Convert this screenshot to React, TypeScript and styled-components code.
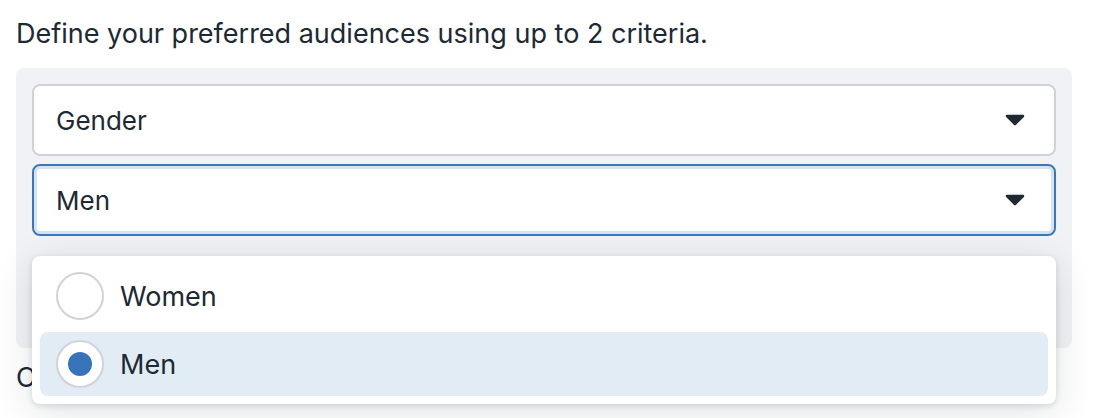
import React from "react";
import styled, { createGlobalStyle } from "styled-components";

const Global = createGlobalStyle`
  html, body { margin: 0; padding: 0; background: #ffffff; }
  body { font-family: Inter, "Noto Sans", "Liberation Sans", sans-serif; color: #1d2933; }
`;

const Page = styled.div`
  padding: 16px;
  width: 1056px;
  height: 386px;
  overflow: hidden;
`;

const Heading = styled.p`
  margin: 0 0 16px;
  font-size: 27px;
  line-height: 36px;
  color: #1d2933;
`;

const Panel = styled.div`
  background: #f1f2f5;
  border-radius: 8px;
  padding: 16px;
  display: flex;
  flex-direction: column;
  gap: 8px;
  width: 1024px;
`;

const SelectWrap = styled.div`
  position: relative;
`;

const SelectBox = styled.div<{ $focused?: boolean }>`
  box-sizing: border-box;
  height: 72px;
  display: flex;
  align-items: center;
  justify-content: space-between;
  padding: 0 29px 0 22px;
  background: #ffffff;
  border: 2px solid ${(p) => (p.$focused ? "#3a77bc" : "#cfd2d7")};
  border-radius: 8px;
  box-shadow: ${(p) => (p.$focused ? "inset 0 0 0 3px #d6e4f2" : "none")};
  font-size: 26px;
  color: #1d2933;
`;

const Spacer = styled.div`
  height: 88px;
`;

const After = styled.p`
  margin: 12px 0 0;
  font-size: 27px;
  line-height: 36px;
  color: #1d2933;
`;

const Menu = styled.div`
  position: absolute;
  top: calc(100% + 20px);
  left: 0;
  right: 0;
  box-sizing: border-box;
  background: #ffffff;
  border-radius: 8px;
  padding: 8px;
  display: flex;
  flex-direction: column;
  gap: 4px;
  box-shadow: 0 2px 6px rgba(20, 30, 45, 0.14), 0 8px 40px rgba(20, 30, 45, 0.12);
  z-index: 2;
`;

const Option = styled.div<{ $selected?: boolean }>`
  height: 64px;
  display: flex;
  align-items: center;
  gap: 16px;
  padding: 0 16px;
  border-radius: 8px;
  background: ${(p) => (p.$selected ? "#e2ecf5" : "transparent")};
  font-size: 27px;
  color: #1d2933;
`;

const Radio = styled.span<{ $checked?: boolean }>`
  box-sizing: border-box;
  width: 48px;
  height: 48px;
  border-radius: 50%;
  border: 2px solid #d0d3d8;
  background: #ffffff;
  display: flex;
  align-items: center;
  justify-content: center;
  flex: none;
  &::after {
    content: "";
    width: 24px;
    height: 24px;
    border-radius: 50%;
    background: #3574b9;
    display: ${(p) => (p.$checked ? "block" : "none")};
  }
`;

const Caret = () => (
  <svg width="20" height="12" viewBox="0 0 20 12" aria-hidden="true">
    <path d="M2 2 L18 2 L10 10 Z" fill="#1d2933" stroke="#1d2933" strokeWidth="2.5" strokeLinejoin="round" />
  </svg>
);

export default function App() {
  return (
    <>
      <Global />
      <Page>
        <Heading>Define your preferred audiences using up to 2 criteria.</Heading>
        <Panel>
          <SelectBox>
            <span>Gender</span>
            <Caret />
          </SelectBox>
          <SelectWrap>
            <SelectBox $focused>
              <span>Men</span>
              <Caret />
            </SelectBox>
            <Menu role="listbox">
              <Option>
                <Radio />
                <span>Women</span>
              </Option>
              <Option $selected>
                <Radio $checked />
                <span>Men</span>
              </Option>
            </Menu>
          </SelectWrap>
          <Spacer />
        </Panel>
        <After>Choose the regions you want to reach.</After>
      </Page>
    </>
  );
}
